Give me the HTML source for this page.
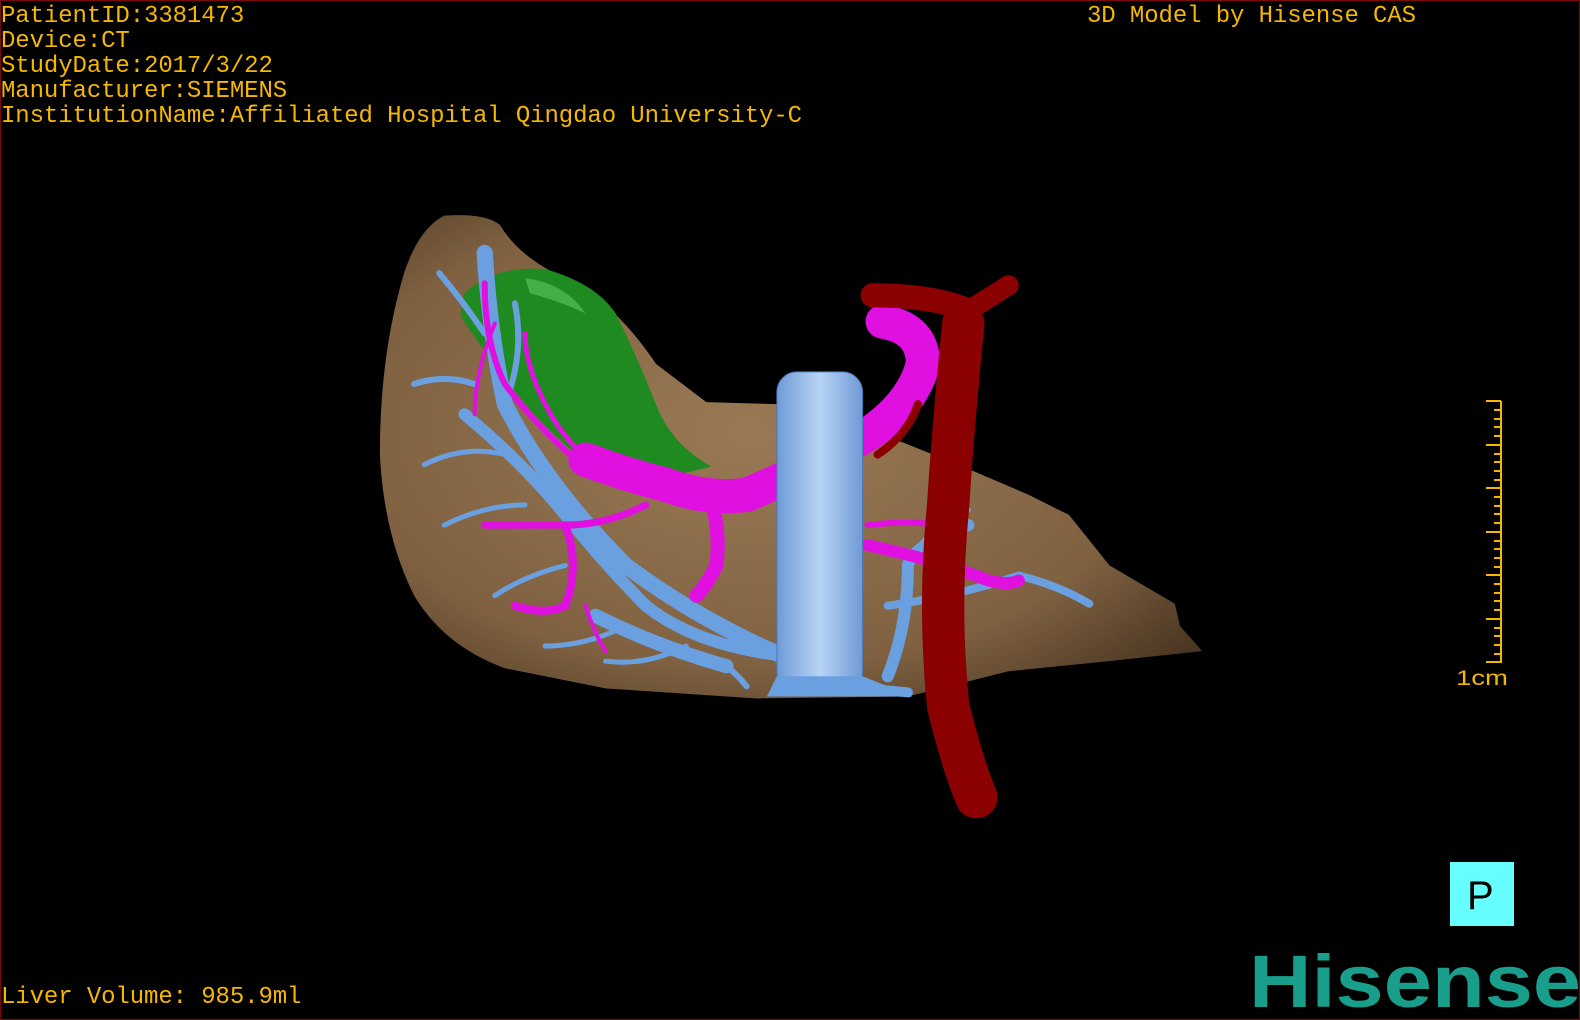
<!DOCTYPE html>
<html><head><meta charset="utf-8"><style>
html,body{margin:0;padding:0;background:#000;}
#p{position:relative;width:1580px;height:1020px;background:#000;overflow:hidden;box-sizing:border-box;border:1px solid #7a0a0a;}
.t{position:absolute;font-family:"Liberation Mono",monospace;font-size:24px;color:#f5b800;line-height:25px;white-space:pre;letter-spacing:-0.1px;}
svg{position:absolute;left:0;top:0;}
</style></head><body><div id="p">
<svg width="1580" height="1020" viewBox="0 0 1568 1012" preserveAspectRatio="none">
<defs>
<radialGradient id="lv" cx="0.45" cy="0.45" r="0.7"><stop offset="0" stop-color="#9a7a55"/><stop offset="0.7" stop-color="#7f6141"/><stop offset="1" stop-color="#4a3622"/></radialGradient>
<linearGradient id="ivc" x1="0" x2="1"><stop offset="0" stop-color="#6f9ad6"/><stop offset="0.5" stop-color="#b8d4f5"/><stop offset="1" stop-color="#6f9ad6"/></linearGradient>
</defs>
<path d="M440,213 Q480,210 495,222 Q515,255 560,275 Q610,300 650,360 L700,398 L770,400 L850,420 L950,460 L1020,490 L1060,510 L1100,560 L1165,598 L1170,620 L1192,645 L1100,655 L1000,665 L900,690 L750,692 L600,682 L500,662 Q440,640 410,590 Q380,530 376,450 Q376,350 400,270 Q415,225 440,213 Z" fill="url(#lv)"/>
<path d="M460,290 Q490,262 540,266 Q590,280 610,310 Q630,350 650,400 Q665,440 705,462 L650,475 L600,472 Q560,445 520,400 Q480,350 456,312 Z" fill="#1f8a1f"/>
<path d="M520,275 Q560,280 580,310 Q560,300 525,290 Z" fill="#5ec85e" opacity="0.6"/>
<g fill="none" stroke="#6a9fe0" stroke-linecap="round">
<path d="M800,660 Q700,620 620,560 Q540,480 500,400 Q485,330 480,250" stroke-width="16"/>
<path d="M780,650 Q690,640 640,600 Q600,560 560,510 Q520,460 460,410" stroke-width="12"/>
<path d="M720,660 Q650,640 590,610" stroke-width="14"/>
<path d="M880,670 Q900,620 900,560 Q905,540 960,520" stroke-width="12"/>
<path d="M880,600 Q950,590 1010,570 Q1050,580 1080,598" stroke-width="8"/>
<path d="M480,330 Q460,300 435,270" stroke-width="6"/>
<path d="M470,380 Q440,370 410,380" stroke-width="6"/>
<path d="M500,450 Q460,440 420,460" stroke-width="5"/>
<path d="M520,500 Q480,500 440,520" stroke-width="5"/>
<path d="M560,560 Q520,570 490,590" stroke-width="5"/>
<path d="M620,620 Q580,640 540,640" stroke-width="5"/>
<path d="M680,640 Q640,660 600,655" stroke-width="5"/>
<path d="M700,650 Q720,655 740,680" stroke-width="6"/>
<path d="M500,400 Q520,350 510,300" stroke-width="6"/>
<path d="M900,560 Q920,520 960,505" stroke-width="5"/>
<path d="M840,680 L900,686" stroke-width="10"/>
</g>
<g fill="none" stroke="#e010e0" stroke-linecap="round">
<path d="M875,318 Q915,325 915,360 Q905,400 860,430 Q800,465 740,490 Q700,495 660,480 Q620,470 580,455" stroke-width="34"/>
<path d="M700,480 Q715,520 710,560 Q700,580 690,590" stroke-width="14"/>
<path d="M570,455 Q530,420 500,380 Q480,340 480,280" stroke-width="6"/>
<path d="M600,470 Q560,440 540,400 Q520,360 520,330" stroke-width="5"/>
<path d="M640,500 Q600,520 560,520 Q520,520 480,520" stroke-width="7"/>
<path d="M560,520 Q575,560 560,600 Q540,610 510,600" stroke-width="8"/>
<path d="M860,540 Q930,555 980,575 Q1000,580 1010,575" stroke-width="12"/>
<path d="M860,520 Q900,515 930,520" stroke-width="6"/>
<path d="M580,600 Q590,630 600,645" stroke-width="4"/>
<path d="M490,320 Q470,370 470,410" stroke-width="4"/>
</g>
<rect x="770" y="368" width="85" height="318" rx="20" fill="url(#ivc)" stroke="#4a78b8" stroke-width="1"/>
<path d="M770,670 L760,690 L905,690 L855,670 Z" fill="#6a9fe0"/>
<g fill="none" stroke="#8b0000" stroke-linecap="round">
<path d="M865,292 Q920,292 955,305" stroke-width="24"/>
<path d="M955,310 Q980,295 1000,282" stroke-width="20"/>
<path d="M955,320 Q945,420 940,500 Q930,600 940,700 Q955,760 968,790" stroke-width="42"/>
<path d="M910,400 Q900,430 870,450" stroke-width="8"/>
</g>
</svg>
<div class="t" style="left:0;top:3px;">PatientID:3381473
Device:CT
StudyDate:2017/3/22
Manufacturer:SIEMENS
InstitutionName:Affiliated Hospital Qingdao University-C</div>
<div class="t" style="left:1086px;top:3px;">3D Model by Hisense CAS</div>
<div class="t" style="left:0;top:984px;">Liver Volume: 985.9ml</div>
<svg width="1580" height="1020" viewBox="0 0 1580 1020">
<g stroke="#f5b800" stroke-width="2">
<line x1="1500" y1="400" x2="1500" y2="662"/>
<line x1="1485" y1="400" x2="1500" y2="400"/><line x1="1485" y1="444" x2="1500" y2="444"/><line x1="1485" y1="487" x2="1500" y2="487"/><line x1="1485" y1="531" x2="1500" y2="531"/><line x1="1485" y1="574" x2="1500" y2="574"/><line x1="1485" y1="618" x2="1500" y2="618"/><line x1="1485" y1="661" x2="1500" y2="661"/>
<line x1="1493" y1="409" x2="1500" y2="409"/><line x1="1493" y1="418" x2="1500" y2="418"/><line x1="1493" y1="426" x2="1500" y2="426"/><line x1="1493" y1="435" x2="1500" y2="435"/>
<line x1="1493" y1="453" x2="1500" y2="453"/><line x1="1493" y1="461" x2="1500" y2="461"/><line x1="1493" y1="470" x2="1500" y2="470"/><line x1="1493" y1="479" x2="1500" y2="479"/>
<line x1="1493" y1="496" x2="1500" y2="496"/><line x1="1493" y1="505" x2="1500" y2="505"/><line x1="1493" y1="513" x2="1500" y2="513"/><line x1="1493" y1="522" x2="1500" y2="522"/>
<line x1="1493" y1="540" x2="1500" y2="540"/><line x1="1493" y1="548" x2="1500" y2="548"/><line x1="1493" y1="557" x2="1500" y2="557"/><line x1="1493" y1="566" x2="1500" y2="566"/>
<line x1="1493" y1="583" x2="1500" y2="583"/><line x1="1493" y1="592" x2="1500" y2="592"/><line x1="1493" y1="600" x2="1500" y2="600"/><line x1="1493" y1="609" x2="1500" y2="609"/>
<line x1="1493" y1="627" x2="1500" y2="627"/><line x1="1493" y1="635" x2="1500" y2="635"/><line x1="1493" y1="644" x2="1500" y2="644"/><line x1="1493" y1="653" x2="1500" y2="653"/>
</g>
<text x="1455" y="684" font-family="Liberation Sans,sans-serif" font-size="21" fill="#f5b800" textLength="52" lengthAdjust="spacingAndGlyphs">1cm</text>
<rect x="1449" y="861" width="64" height="64" fill="#66ffff"/>
<text x="1466" y="908" font-family="Liberation Sans,sans-serif" font-size="40" fill="#000">P</text>
<text x="1248" y="1006" font-family="Liberation Sans,sans-serif" font-weight="bold" font-size="74" fill="#1a9e8c" textLength="332" lengthAdjust="spacingAndGlyphs">Hisense</text>
</svg>
</div></body></html>
